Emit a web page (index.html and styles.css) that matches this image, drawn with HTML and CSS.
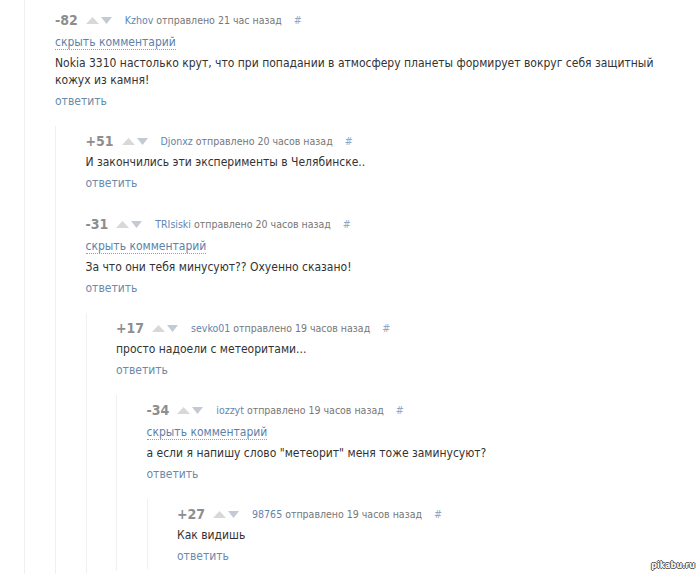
FILE: index.html
```html
<!DOCTYPE html>
<html lang="ru">
<head>
  <meta charset="UTF-8">
  <meta name="viewport" content="width=device-width, initial-scale=1.0">
  <title>Комментарии</title>
  <link rel="stylesheet" href="styles.css">
</head>
<body>
  <div class="thread">
    <div class="comment">
      <div class="comment-header">
        <span class="rating">-82</span>
        <span class="votes">
          <svg class="vote-up" width="13" height="8" viewBox="0 0 13 8"><polygon points="0,8 6.5,1 13,8"/></svg>
          <svg class="vote-down" width="11" height="8" viewBox="0 0 11 8"><polygon points="0,1 11,1 5.5,8"/></svg>
        </span>
        <a href="#" class="author">Kzhov</a>
        <span class="date">отправлено 21 час назад</span>
        <a href="#" class="anchor">#</a>
      </div>
      <div class="hide-row"><a href="#" class="hide-link">скрыть комментарий</a></div>
      <div class="comment-text">Nokia 3310 настолько крут, что при попадании в атмосферу планеты формирует вокруг себя защитный кожух из камня!</div>
      <div class="reply-row"><a href="#" class="reply">ответить</a></div>

      <div class="replies">
        <div class="comment">
          <div class="comment-header">
            <span class="rating">+51</span>
            <span class="votes">
              <svg class="vote-up" width="13" height="8" viewBox="0 0 13 8"><polygon points="0,8 6.5,1 13,8"/></svg>
              <svg class="vote-down" width="11" height="8" viewBox="0 0 11 8"><polygon points="0,1 11,1 5.5,8"/></svg>
            </span>
            <a href="#" class="author">Djonxz</a>
            <span class="date">отправлено 20 часов назад</span>
            <a href="#" class="anchor">#</a>
          </div>
          <div class="comment-text">И закончились эти эксперименты в Челябинске..</div>
          <div class="reply-row"><a href="#" class="reply">ответить</a></div>
        </div>

        <div class="comment">
          <div class="comment-header">
            <span class="rating">-31</span>
            <span class="votes">
              <svg class="vote-up" width="13" height="8" viewBox="0 0 13 8"><polygon points="0,8 6.5,1 13,8"/></svg>
              <svg class="vote-down" width="11" height="8" viewBox="0 0 11 8"><polygon points="0,1 11,1 5.5,8"/></svg>
            </span>
            <a href="#" class="author">TRIsiski</a>
            <span class="date">отправлено 20 часов назад</span>
            <a href="#" class="anchor">#</a>
          </div>
          <div class="hide-row"><a href="#" class="hide-link">скрыть комментарий</a></div>
          <div class="comment-text">За что они тебя минусуют?? Охуенно сказано!</div>
          <div class="reply-row"><a href="#" class="reply">ответить</a></div>

          <div class="replies">
            <div class="comment">
              <div class="comment-header">
                <span class="rating">+17</span>
                <span class="votes">
                  <svg class="vote-up" width="13" height="8" viewBox="0 0 13 8"><polygon points="0,8 6.5,1 13,8"/></svg>
                  <svg class="vote-down" width="11" height="8" viewBox="0 0 11 8"><polygon points="0,1 11,1 5.5,8"/></svg>
                </span>
                <a href="#" class="author">sevko01</a>
                <span class="date">отправлено 19 часов назад</span>
                <a href="#" class="anchor">#</a>
              </div>
              <div class="comment-text">просто надоели с метеоритами...</div>
              <div class="reply-row"><a href="#" class="reply">ответить</a></div>

              <div class="replies">
                <div class="comment">
                  <div class="comment-header">
                    <span class="rating">-34</span>
                    <span class="votes">
                      <svg class="vote-up" width="13" height="8" viewBox="0 0 13 8"><polygon points="0,8 6.5,1 13,8"/></svg>
                      <svg class="vote-down" width="11" height="8" viewBox="0 0 11 8"><polygon points="0,1 11,1 5.5,8"/></svg>
                    </span>
                    <a href="#" class="author">iozzyt</a>
                    <span class="date">отправлено 19 часов назад</span>
                    <a href="#" class="anchor">#</a>
                  </div>
                  <div class="hide-row"><a href="#" class="hide-link">скрыть комментарий</a></div>
                  <div class="comment-text">а если я напишу слово "метеорит" меня тоже заминусуют?</div>
                  <div class="reply-row"><a href="#" class="reply">ответить</a></div>

                  <div class="replies">
                    <div class="comment">
                      <div class="comment-header">
                        <span class="rating">+27</span>
                        <span class="votes">
                          <svg class="vote-up" width="13" height="8" viewBox="0 0 13 8"><polygon points="0,8 6.5,1 13,8"/></svg>
                          <svg class="vote-down" width="11" height="8" viewBox="0 0 11 8"><polygon points="0,1 11,1 5.5,8"/></svg>
                        </span>
                        <a href="#" class="author">98765</a>
                        <span class="date">отправлено 19 часов назад</span>
                        <a href="#" class="anchor">#</a>
                      </div>
                      <div class="comment-text">Как видишь</div>
                      <div class="reply-row"><a href="#" class="reply">ответить</a></div>
                    </div>
                  </div>
                </div>
              </div>
            </div>
          </div>
        </div>
      </div>
    </div>
  </div>

  <div class="watermark">pikabu.ru</div>
</body>
</html>
```

FILE: styles.css
```css
html, body {
  height: 100%;
  overflow: hidden;
}

body {
  margin: 0;
  background: #ffffff;
  font-family: "DejaVu Sans Condensed", "DejaVu Sans", Verdana, sans-serif;
  color: #333333;
}

a {
  text-decoration: none;
}

.thread {
  margin-left: 24px;
  padding-left: 30px;
  padding-right: 20px;
  border-left: 1px solid #f0f0f0;
  min-height: 100%;
}

.comment {
  padding-top: 4px;
  padding-bottom: 2px;
}

.comment + .comment {
  margin-top: 13px;
}

.thread > .comment {
  padding-top: 9px;
}

.comment-header {
  display: flex;
  align-items: center;
  height: 22px;
  font-size: 10.5px;
}

.rating {
  font-size: 14px;
  font-weight: bold;
  color: #8e8e8e;
  margin-right: 8px;
}

.votes {
  display: flex;
  align-items: center;
  gap: 2px;
  margin-right: 13px;
}

.vote-up polygon {
  fill: #d8d8d8;
}

.vote-down polygon {
  fill: #c3cad3;
}

.author {
  color: #5f86b0;
  margin-right: 3px;
}

.date {
  color: #777777;
}

.anchor {
  color: #8ea8c6;
  margin-left: 12px;
}

.hide-row {
  height: 22px;
  line-height: 22px;
  font-size: 12px;
}

.hide-link {
  color: #5c82aa;
  border-bottom: 1px dotted #8aa2bd;
}

.comment-text {
  font-size: 12px;
  line-height: 17px;
  margin: 2px 0;
}

.reply-row {
  height: 21px;
  line-height: 21px;
  font-size: 12px;
}

.reply {
  color: #6a8bab;
}

.replies {
  margin-top: 14px;
  padding-left: 29.5px;
  border-left: 1px solid #f0f0f0;
}

.watermark {
  position: absolute;
  right: 5px;
  bottom: 4px;
  font-family: "DejaVu Sans Condensed", sans-serif;
  font-size: 9px;
  font-weight: bold;
  color: #ffffff;
  text-shadow: 1px 0 0 #555, -1px 0 0 #555, 0 1px 0 #555, 0 -1px 0 #555;
}
```
